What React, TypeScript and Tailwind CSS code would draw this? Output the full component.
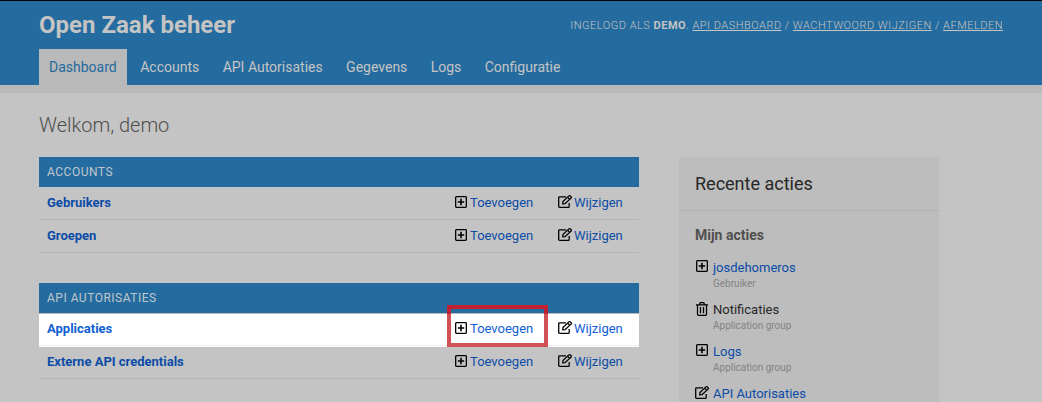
import type { ReactNode } from 'react';

type IconKind = 'add' | 'edit' | 'delete';

function Icon({ kind }: { kind: IconKind }) {
  if (kind === 'add') {
    return (
      <svg className="h-3 w-3 shrink-0" viewBox="0 0 12 12" fill="none" stroke="currentColor">
        <rect x="0.65" y="0.65" width="10.7" height="10.7" rx="0.8" strokeWidth="1.3" />
        <path d="M6 2.8v6.4M2.8 6h6.4" strokeWidth="1.6" />
      </svg>
    );
  }
  if (kind === 'edit') {
    return (
      <svg className="h-[13px] w-3.5 shrink-0" viewBox="0 0 14 13" fill="none" stroke="currentColor" strokeWidth="1.3">
        <path d="M8 1.8H1.6a.9.9 0 0 0-.9.9v8.7a.9.9 0 0 0 .9.9h8.7a.9.9 0 0 0 .9-.9V8" />
        <path d="M4.7 8.9l.3-2.4L10.9.9a.9.9 0 0 1 1.3 0l.9.9a.9.9 0 0 1 0 1.3L7.2 8.6z" strokeLinejoin="round" />
        <path d="M9.6 2.2l2.2 2.2" />
      </svg>
    );
  }
  return (
    <svg className="h-3.5 w-3 shrink-0" viewBox="0 0 12 14" fill="none" stroke="currentColor" strokeWidth="1.25">
      <path d="M0 2.8h12M3.4 2.6l.9-1.9h3.4l.9 1.9M1.5 3v9.3a1 1 0 0 0 1 1h7a1 1 0 0 0 1-1V3" />
      <path d="M4.5 5v6.3M7.5 5v6.3" />
    </svg>
  );
}

const navItems = ['Accounts', 'API Autorisaties', 'Gegevens', 'Logs', 'Configuratie'];

function ToolLink({ children }: { children: ReactNode }) {
  return <a className="underline decoration-[#c4c4c4] decoration-1 underline-offset-1">{children}</a>;
}

function ModelRow({ name, className }: { name: string; className: string }) {
  return (
    <div className={`flex h-[33px] items-center border-b pl-2 text-[13px] leading-4 ${className}`}>
      <a className="w-[408px] font-bold">{name}</a>
      <a className="flex w-[103px] items-center gap-[3px]">
        <span className="pb-0.5 text-black"><Icon kind="add" /></span>
        Toevoegen
      </a>
      <a className="flex items-center gap-0.5">
        <span className="pb-[3px] text-black"><Icon kind="edit" /></span>
        Wijzigen
      </a>
    </div>
  );
}

function Module({ title, children }: { title: string; children: ReactNode }) {
  return (
    <section className="relative mb-[30px]">
      <h2 className="flex h-[30px] items-center bg-[#246b9f] pl-2 text-xs tracking-[0.5px] text-[#c0c7cc]">{title}</h2>
      {children}
    </section>
  );
}

function Action({ kind, name, type, plain }: { kind: IconKind; name: string; type?: string; plain?: boolean }) {
  return (
    <li className="flex h-[42px]">
      <span className={kind === 'edit' ? 'w-[18px] text-black' : 'w-[17px] pl-px text-black'}>
        <Icon kind={kind} />
      </span>
      <div className={kind === 'edit' ? '' : 'pl-px'}>
        <div className={`text-[13px] leading-4 ${plain ? 'text-[#272727]' : 'text-[#0b4ca7]'}`}>{name}</div>
        {type && <div className="text-[10px] leading-4 text-[#838383]">{type}</div>}
      </div>
    </li>
  );
}

export default function App() {
  return (
    <div className="h-[402px] w-[1042px] overflow-hidden bg-[#c4c4c4] font-['Roboto',sans-serif]">
      <header className="h-[93px] border-t border-b-8 border-t-black border-b-[#b9b9b9] bg-[#246b9f] px-[39px]">
        <div className="flex h-12 items-center justify-between">
          <h1 className="text-2xl font-bold text-[#c4c4c4]">Open Zaak beheer</h1>
          <div className="pt-0.5 text-[11px] leading-4 font-light tracking-[0.5px] whitespace-pre text-[#c4c4c4]">
            INGELOGD ALS <b className="font-bold">DEMO</b>. <ToolLink>API DASHBOARD</ToolLink> / <ToolLink>WACHTWOORD WIJZIGEN</ToolLink> / <ToolLink>AFMELDEN</ToolLink>
          </div>
        </div>
        <nav className="flex h-9 items-center text-sm text-[#c4c4c4]">
          <a className="mr-[13.5px] flex h-9 items-center bg-[#b9b9b9] px-2.5 text-[#246b9f]">Dashboard</a>
          <div className="flex gap-[23.4px]">
            {navItems.map((item) => <a key={item}>{item}</a>)}
          </div>
        </nav>
      </header>
      <main className="px-[39px] pt-5">
        <h1 className="h-11 text-xl leading-6 font-light text-[#4e4e4e]">Welkom, demo</h1>
        <div className="flex items-start gap-10">
          <div className="w-[600px]">
            <Module title="ACCOUNTS">
              <ModelRow name="Gebruikers" className="border-[#b5b5b5] text-[#0b4ca7]" />
              <ModelRow name="Groepen" className="border-[#b5b5b5] text-[#0b4ca7]" />
            </Module>
            <Module title="API AUTORISATIES">
              <ModelRow name="Applicaties" className="border-[#eeeeee] bg-white text-[#1060d4] shadow-[inset_0_1px_#b9b9b9,0_1px_white]" />
              <ModelRow name="Externe API credentials" className="border-[#b5b5b5] text-[#0b4ca7]" />
              <div className="absolute top-[22px] left-[408px] flex h-[42px] w-[101px] flex-col">
                <div className="h-[9px] border-x-4 border-t-4 border-[#c22133]" />
                <div className="grow border-x-4 border-b-4 border-[#d05257]" />
              </div>
            </Module>
          </div>
          <aside className="h-[300px] w-[260px] bg-[#bdbdbd]">
            <h2 className="flex h-[54px] items-center border-b border-[#b1b1b1] px-4 text-lg text-[#272727]">Recente acties</h2>
            <h3 className="px-4 pt-4 text-sm leading-4 font-bold text-[#505050]">Mijn acties</h3>
            <ul className="px-4 pt-[17px]">
              <Action kind="add" name="josdehomeros" type="Gebruiker" />
              <Action kind="delete" name="Notificaties" type="Application group" plain />
              <Action kind="add" name="Logs" type="Application group" />
              <Action kind="edit" name="API Autorisaties" />
            </ul>
          </aside>
        </div>
      </main>
    </div>
  );
}
